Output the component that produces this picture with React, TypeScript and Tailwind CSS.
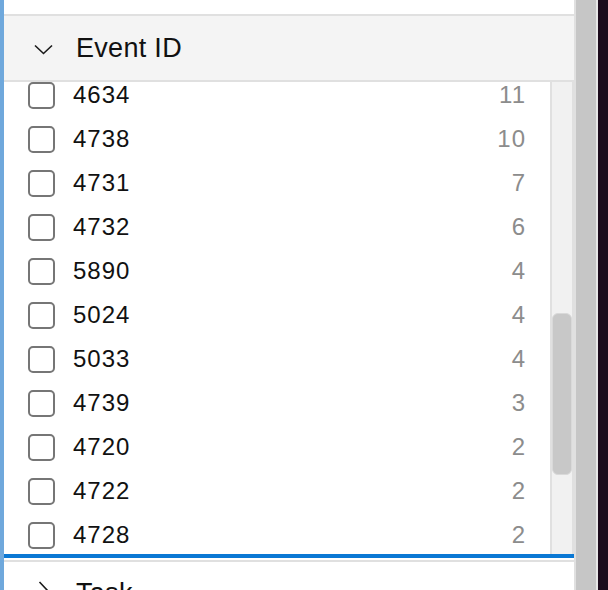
const rows: { id: string; count: number }[] = [
  { id: '4634', count: 11 },
  { id: '4738', count: 10 },
  { id: '4731', count: 7 },
  { id: '4732', count: 6 },
  { id: '5890', count: 4 },
  { id: '5024', count: 4 },
  { id: '5033', count: 4 },
  { id: '4739', count: 3 },
  { id: '4720', count: 2 },
  { id: '4722', count: 2 },
  { id: '4728', count: 2 },
];

const ChevronDown = () => (
  <svg width="19" height="11" viewBox="0 0 19 11" fill="none">
    <polyline points="1,1.5 9.5,9.5 18,1.5" stroke="#1a1a1a" strokeWidth="1.6" />
  </svg>
);

const ChevronRight = () => (
  <svg width="11" height="19" viewBox="0 0 11 19" fill="none">
    <polyline points="1.5,1 9.5,9.5 1.5,18" stroke="#1a1a1a" strokeWidth="1.6" />
  </svg>
);

export default function App() {
  return (
    <div
      className="flex h-[590px] w-[608px] overflow-hidden bg-white"
      style={{ fontFamily: '"Liberation Sans", Arial, sans-serif' }}
    >
      {/* left accent */}
      <div className="w-[4px] shrink-0 bg-[#6fa8dc]" />

      {/* filter panel */}
      <div className="flex w-[572px] shrink-0 flex-col border-r-2 border-[#e0e0e0]">
        <div className="h-[14px] shrink-0 bg-white" />

        {/* Event ID header */}
        <div className="flex h-[68px] shrink-0 items-center border-y-2 border-[#e0e0e0] bg-[#f4f4f4]">
          <div className="ml-[30px] mt-[2px] flex w-[19px] justify-center">
            <ChevronDown />
          </div>
          <span className="ml-[23px] text-[27px] tracking-[0.3px] text-[#111]">Event ID</span>
        </div>

        {/* list + scrollbar */}
        <div className="flex h-[472px] shrink-0">
          <div className="flex-1 overflow-hidden">
            <div className="mt-[-9px]">
              {rows.map((r) => (
                <div key={r.id} className="flex h-[44px] items-center">
                  <div className="ml-[24px] h-[27px] w-[27px] rounded-[5px] border-2 border-[#767676] bg-white" />
                  <span className="ml-[18px] text-[24px] tracking-[1px] text-[#111]">{r.id}</span>
                  <span className="ml-auto mr-[24px] text-[24px] tracking-[1px] text-[#8c8c8c]">
                    {r.count}
                  </span>
                </div>
              ))}
            </div>
          </div>
          <div className="w-[24px] shrink-0 border-x-2 border-[#e0e0e0] bg-[#f1f1f1]">
            <div className="mt-[231px] h-[162px] rounded-[6px] border border-[#d9d9d9] bg-[#c8c8c8]" />
          </div>
        </div>

        <div className="h-[4px] shrink-0 bg-[#0a78d4]" />
        <div className="h-[2px] shrink-0 bg-white" />

        {/* Task header */}
        <div className="flex h-[28px] shrink-0 items-start border-t-2 border-[#e0e0e0] bg-white pt-[16px]">
          <div className="ml-[34px] mt-[3px] flex w-[11px] justify-center">
            <ChevronRight />
          </div>
          <span className="ml-[27px] text-[27px] leading-[30px] tracking-[0.3px] text-[#111]">Task</span>
        </div>
      </div>

      {/* window chrome on the right */}
      <div className="w-[20px] shrink-0 bg-[#c6c6c6]" />
      <div className="w-[2px] shrink-0 bg-[#e6e6e6]" />
      <div className="flex-1 bg-[#1c0b1c]" />
    </div>
  );
}
